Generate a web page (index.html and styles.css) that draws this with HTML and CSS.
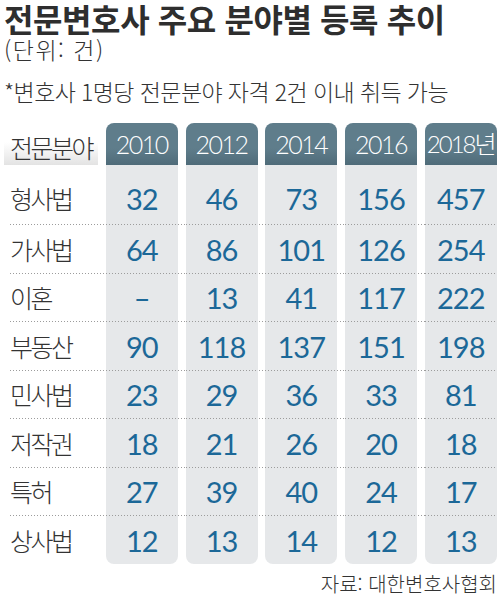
FILE: index.html
```html
<!DOCTYPE html>
<html lang="ko">
<head>
    <meta charset="UTF-8">
    <meta name="viewport" content="width=device-width, initial-scale=1.0">
    <title>전문변호사 주요 분야별 등록 추이</title>
    <link rel="stylesheet" href="styles.css">
</head>
<body>
<div class="chart">
    <h1 class="title">전문변호사 주요 분야별 등록 추이</h1>
    <p class="unit">(단위: 건)</p>
    <p class="note">*변호사 1명당 전문분야 자격 2건 이내 취득 가능</p>

    <!-- Table -->
    <div class="table">
        <div class="row head">
            <div class="label">전문분야</div>
            <div class="year">2010</div>
            <div class="year">2012</div>
            <div class="year">2014</div>
            <div class="year">2016</div>
            <div class="year tight">2018년</div>
        </div>
        <div class="row first">
            <div class="label">형사법</div>
            <div class="cell">32</div><div class="cell">46</div><div class="cell">73</div><div class="cell">156</div><div class="cell">457</div>
        </div>
        <div class="row">
            <div class="label">가사법</div>
            <div class="cell">64</div><div class="cell">86</div><div class="cell">101</div><div class="cell">126</div><div class="cell">254</div>
        </div>
        <div class="row">
            <div class="label">이혼</div>
            <div class="cell">–</div><div class="cell">13</div><div class="cell">41</div><div class="cell">117</div><div class="cell">222</div>
        </div>
        <div class="row">
            <div class="label">부동산</div>
            <div class="cell">90</div><div class="cell">118</div><div class="cell">137</div><div class="cell">151</div><div class="cell">198</div>
        </div>
        <div class="row">
            <div class="label">민사법</div>
            <div class="cell">23</div><div class="cell">29</div><div class="cell">36</div><div class="cell">33</div><div class="cell">81</div>
        </div>
        <div class="row">
            <div class="label">저작권</div>
            <div class="cell">18</div><div class="cell">21</div><div class="cell">26</div><div class="cell">20</div><div class="cell">18</div>
        </div>
        <div class="row">
            <div class="label">특허</div>
            <div class="cell">27</div><div class="cell">39</div><div class="cell">40</div><div class="cell">24</div><div class="cell">17</div>
        </div>
        <div class="row last">
            <div class="label">상사법</div>
            <div class="cell">12</div><div class="cell">13</div><div class="cell">14</div><div class="cell">12</div><div class="cell">13</div>
        </div>
    </div>

    <p class="source">자료: 대한변호사협회</p>
</div>
</body>
</html>
```

FILE: styles.css
```css
html, body {
    margin: 0;
    background: #ffffff;
}

.chart {
    width: 500px;
    height: 595px;
    padding: 0 3px 0 4px;
    box-sizing: border-box;
    overflow: hidden;
    font-family: "Noto Sans CJK KR", "Noto Sans", sans-serif;
    color: #333333;
}

.title {
    margin: 0;
    font-size: 32px;
    line-height: 36px;
    font-weight: 700;
    letter-spacing: -0.4px;
    color: #2e2e2e;
    white-space: nowrap;
}

.unit {
    margin: 0;
    font-size: 23px;
    line-height: 26px;
    font-weight: 300;
    letter-spacing: 1.5px;
}

.note {
    margin: 13px 0 0;
    font-size: 23px;
    line-height: 32px;
    font-weight: 300;
    letter-spacing: -0.6px;
    white-space: nowrap;
}

/* Table */
.table {
    margin-top: 16px;
}

.row {
    display: grid;
    grid-template-columns: 94px repeat(5, 72px);
    grid-template-rows: 100%;
    column-gap: 7.75px;
    height: 48.5px;
    background: repeating-linear-gradient(to right, #9c9c9c 0 1px, transparent 1px 3px) 6px 100% / calc(100% - 8px) 1px no-repeat;
}

.row.head {
    height: 42px;
    background: none;
}

.row.first {
    height: 60px;
}

.row.last {
    height: 48px;
    background: none;
}

.label {
    display: flex;
    align-items: center;
    padding-left: 6px;
    font-size: 25px;
    line-height: 1;
    font-weight: 300;
    letter-spacing: -2.5px;
    color: #333333;
    white-space: nowrap;
}

.head .label {
    margin-top: 7px;
    background: linear-gradient(#ffffff 35%, #e3e3e3);
}

.year {
    display: flex;
    align-items: center;
    justify-content: center;
    border-radius: 8px 8px 0 0;
    background: linear-gradient(#5f7d8b 60%, #4f6b79);
    color: #ffffff;
    font-family: "Lato", "Noto Sans CJK KR", sans-serif;
    font-size: 25px;
    line-height: 1;
    font-weight: 300;
    letter-spacing: -1.5px;
    white-space: nowrap;
}

.year.tight {
    font-size: 24px;
    letter-spacing: -2px;
}

.cell {
    display: flex;
    align-items: center;
    justify-content: center;
    background: repeating-linear-gradient(to right, #9c9c9c 0 1px, transparent 1px 3px) 0 100% / 100% 1px no-repeat, #e6e8ea;
    color: #1c6898;
    font-family: "Lato", sans-serif;
    font-size: 29px;
    line-height: 1;
    letter-spacing: -1px;
}

.first .label,
.first .cell {
    padding-top: 7px;
}

.last .cell {
    background: #e6e8ea;
    border-radius: 0 0 8px 8px;
}

.source {
    margin: 9px 0 0;
    text-align: right;
    font-size: 20px;
    line-height: 22px;
    font-weight: 300;
    white-space: nowrap;
}
```
